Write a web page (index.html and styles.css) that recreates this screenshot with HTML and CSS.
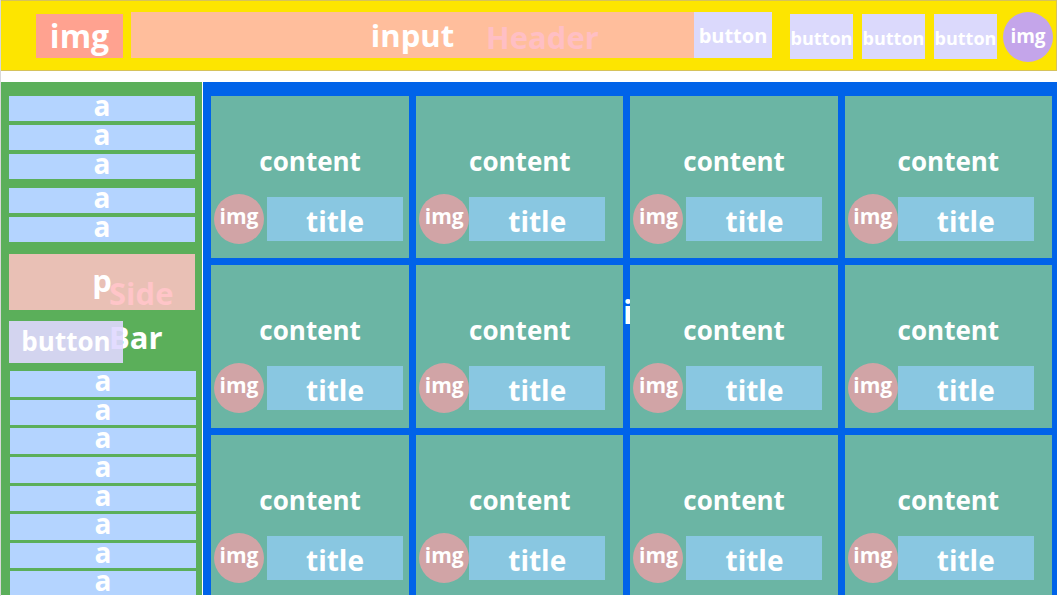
FILE: index.html
```html
<!DOCTYPE html>
<html lang="en">
<head>
<meta charset="utf-8">
<title>Layout</title>
<link rel="stylesheet" href="styles.css">
</head>
<body>
<header class="header">
  <div class="logo">img</div>
  <form class="search">
    <input class="search-input" type="text" value="input" aria-label="Search">
    <span class="header-label">Header</span>
    <button class="search-button" type="button">button</button>
  </form>
  <nav class="actions">
    <button class="action" type="button">button</button>
    <button class="action" type="button">button</button>
    <button class="action" type="button">button</button>
  </nav>
  <div class="avatar">img</div>
</header>
<div class="body">
  <aside class="sidebar">
    <nav class="links">
      <a class="link" href="#">a</a>
      <a class="link" href="#">a</a>
      <a class="link" href="#">a</a>
    </nav>
    <nav class="links">
      <a class="link" href="#">a</a>
      <a class="link" href="#">a</a>
    </nav>
    <p class="note">p</p>
    <button class="side-button" type="button">button</button>
    <nav class="links links-fill">
      <a class="link" href="#">a</a>
      <a class="link" href="#">a</a>
      <a class="link" href="#">a</a>
      <a class="link" href="#">a</a>
      <a class="link" href="#">a</a>
      <a class="link" href="#">a</a>
      <a class="link" href="#">a</a>
      <a class="link" href="#">a</a>
    </nav>
    <div class="side-label"><span class="side-word">Side</span><span>Bar</span></div>
  </aside>
  <main class="grid">
    <span class="grid-label">i</span>
    <article class="card"><div class="content">content</div><div class="meta"><div class="thumb">img</div><div class="title">title</div></div></article>
    <article class="card"><div class="content">content</div><div class="meta"><div class="thumb">img</div><div class="title">title</div></div></article>
    <article class="card"><div class="content">content</div><div class="meta"><div class="thumb">img</div><div class="title">title</div></div></article>
    <article class="card"><div class="content">content</div><div class="meta"><div class="thumb">img</div><div class="title">title</div></div></article>
    <article class="card"><div class="content">content</div><div class="meta"><div class="thumb">img</div><div class="title">title</div></div></article>
    <article class="card"><div class="content">content</div><div class="meta"><div class="thumb">img</div><div class="title">title</div></div></article>
    <article class="card"><div class="content">content</div><div class="meta"><div class="thumb">img</div><div class="title">title</div></div></article>
    <article class="card"><div class="content">content</div><div class="meta"><div class="thumb">img</div><div class="title">title</div></div></article>
    <article class="card"><div class="content">content</div><div class="meta"><div class="thumb">img</div><div class="title">title</div></div></article>
    <article class="card"><div class="content">content</div><div class="meta"><div class="thumb">img</div><div class="title">title</div></div></article>
    <article class="card"><div class="content">content</div><div class="meta"><div class="thumb">img</div><div class="title">title</div></div></article>
    <article class="card"><div class="content">content</div><div class="meta"><div class="thumb">img</div><div class="title">title</div></div></article>
  </main>
</div>
</body>
</html>
```

FILE: styles.css
```css
* { box-sizing: border-box; }

body {
  margin: 0;
  min-height: 100vh;
  display: flex;
  flex-direction: column;
  gap: 11px;
  padding: 0 1px 1px 0;
  border-left: 1px solid #d9d9d9;
  background: #fff;
  color: #fff;
  font-family: "Open Sans", "Noto Sans", sans-serif;
  font-weight: 700;
}

button, input {
  margin: 0;
  padding: 0;
  border: 0;
  border-radius: 0;
  color: inherit;
  font-family: inherit;
  font-weight: inherit;
}

.header {
  display: flex;
  align-items: flex-start;
  padding: 11px 3px 8px 35px;
  border: 1px solid #d6c25a;
  border-left: 0;
  background: #fde500;
}

.logo {
  width: 87px;
  height: 44px;
  margin: 2px 8px 0 0;
  background: #ffa290;
  font-size: 32px;
  line-height: 44px;
  text-align: center;
}

.search {
  position: relative;
  flex: 1;
  display: flex;
  height: 46px;
}

.search-input {
  flex: 1;
  min-width: 0;
  background: #ffbe9c;
  font-size: 31px;
  text-align: center;
}

.header-label {
  position: absolute;
  top: 3px;
  left: 355px;
  color: #ffbfc4;
  font-size: 31px;
  line-height: 44px;
}

.search-button {
  width: 78px;
  background: #dbd9fc;
  font-size: 20px;
}

.actions {
  display: flex;
  gap: 9px;
  margin: 2px 6px 0 18px;
}

.action {
  width: 63px;
  height: 45px;
  padding-top: 2px;
  background: #dbd9fc;
  font-size: 18px;
}

.avatar {
  width: 50px;
  height: 50px;
  border-radius: 50%;
  background: #c4a5ea;
  font-size: 19px;
  line-height: 48px;
  text-align: center;
}

.body {
  flex: 1;
  display: flex;
  gap: 1px;
}

.sidebar {
  position: relative;
  width: 201px;
  display: flex;
  flex-direction: column;
  padding: 14px 7px 0 8px;
  overflow: hidden;
  background: #5baf5a;
}

.links {
  display: flex;
  flex-direction: column;
  gap: 4px;
  margin-bottom: 9px;
}

.links + .note { margin-top: 3px; }

.link {
  height: 25px;
  background: #b4d4ff;
  color: inherit;
  font-size: 28px;
  line-height: 18px;
  text-align: center;
  text-decoration: none;
}

.links-fill {
  flex: 1;
  gap: 3px;
  margin: 0 -1px -2px 1px;
}

.links-fill .link { flex: 1; }

.note {
  height: 56px;
  margin: 0 0 11px;
  background: #e9c0b5;
  font-size: 31px;
  line-height: 52px;
  text-align: center;
}

.side-button {
  position: relative;
  z-index: 2;
  width: 114px;
  height: 42px;
  margin-bottom: 8px;
  padding-bottom: 2px;
  background: rgba(224, 216, 255, 0.9);
  font-size: 26px;
  line-height: 36px;
}

.side-label {
  position: absolute;
  z-index: 1;
  top: 189px;
  left: 108px;
  display: flex;
  flex-direction: column;
  font-size: 31px;
  line-height: 44px;
}

.side-word { color: #ffc5c8; }

.grid {
  position: relative;
  flex: 1;
  display: grid;
  grid-template-columns: 198fr 207fr 207fr 207fr;
  grid-template-rows: 162px 163px 1fr;
  gap: 7px;
  padding: 14px 5px 0 8px;
  background: #0063e9;
}

.grid-label {
  position: absolute;
  top: 208px;
  left: 420px;
  font-size: 32px;
  line-height: 44px;
}

.card {
  position: relative;
  background: #6bb5a4;
}

.content {
  padding-top: 45px;
  font-size: 26px;
  line-height: 40px;
  text-align: center;
}

.meta {
  display: flex;
  align-items: center;
  padding: 13px 0 0 3px;
}

.card:nth-of-type(odd) .meta { gap: 3px; }

.thumb {
  width: 50px;
  height: 50px;
  border-radius: 50%;
  background: #d1a4a6;
  font-size: 21px;
  line-height: 44px;
  text-align: center;
}

.title {
  width: 136px;
  height: 44px;
  background: #89c7e1;
  font-size: 28px;
  line-height: 48px;
  text-align: center;
}
```
